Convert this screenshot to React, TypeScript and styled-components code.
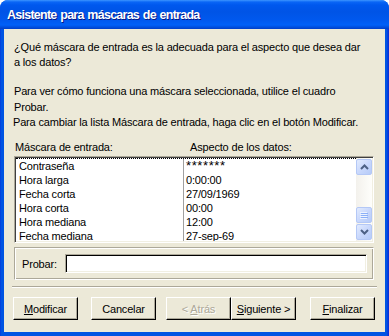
import React from "react";
import styled, { createGlobalStyle } from "styled-components";

const GlobalStyle = createGlobalStyle`
  html, body { margin: 0; padding: 0; background: #ffffff; }
  * { box-sizing: border-box; }
`;

const Window = styled.div`
  width: 389px;
  height: 336px;
  display: flex;
  flex-direction: column;
  background: #0054e3;
  border-radius: 8px 8px 0 0;
  overflow: hidden;
  font-family: "Liberation Sans", Arial, sans-serif;
  font-size: 11px;
  letter-spacing: -0.17px;
  color: #000;
`;

const TitleBar = styled.div`
  height: 29px;
  flex: none;
  display: flex;
  align-items: center;
  padding: 1px 0 0 7px;
  background: linear-gradient(
    to bottom,
    #3d95ff 0px,
    #0a66f6 2px,
    #0058ee 5px,
    #0054e6 12px,
    #0058ee 20px,
    #0060f8 25px,
    #0050e0 27px,
    #003ec8 29px
  );
  color: #ffffff;
  font-family: "Liberation Sans", Arial, sans-serif;
  font-weight: bold;
  font-size: 12.5px;
  letter-spacing: -0.75px;
  word-spacing: 1px;
  text-shadow: 1px 1px 0 #0a1883;
`;

const Frame = styled.div`
  flex: 1;
  display: flex;
  padding: 0 4px 4px 4px;
  background: linear-gradient(to right, #0831d9 0, #0054e3 1px, #0054e3 387px, #0831d9 388px);
`;

const Body = styled.div`
  flex: 1;
  display: flex;
  flex-direction: column;
  background: #ece9d8;
`;

const Text = styled.div<{ $top: number; $left?: number; $lh?: number }>`
  margin-top: ${(p) => p.$top}px;
  margin-left: ${(p) => p.$left ?? 10}px;
  line-height: ${(p) => p.$lh ?? 15}px;
  white-space: nowrap;
`;

const Labels = styled.div`
  margin-top: 10px;
  margin-left: 11px;
  display: flex;
  line-height: 14px;
`;

const Label = styled.span<{ $w?: number }>`
  width: ${(p) => (p.$w ? `${p.$w}px` : "auto")};
`;

const ListBox = styled.div`
  margin-top: 2px;
  margin-left: 10px;
  width: 360px;
  height: 87px;
  display: flex;
  background: #ffffff;
  border-top: 1px solid #aca899;
  border-left: 1px solid #aca899;
  border-bottom: 1px solid #ffffff;
  border-right: 1px solid #ffffff;
  box-shadow: inset 1px 1px 0 #404040, inset -1px -1px 0 #f1efe2;
  padding: 1px;
`;

const Rows = styled.div`
  flex: 1;
  overflow: hidden;
  border-top: 1px dotted #000;
`;

const Row = styled.div`
  display: flex;
  height: 14px;
  line-height: 14px;
`;

const Cell = styled.div<{ $first?: boolean }>`
  width: ${(p) => (p.$first ? "167px" : "auto")};
  flex: ${(p) => (p.$first ? "none" : "1")};
  padding-left: ${(p) => (p.$first ? 3 : 2)}px;
  border-left: ${(p) => (p.$first ? "none" : "1px solid #a0a0a0")};
  white-space: nowrap;
`;

const Stars = styled.span`
  font-size: 13px;
  letter-spacing: 0.6px;
  line-height: 14px;
`;

const Scrollbar = styled.div`
  width: 16px;
  flex: none;
  display: flex;
  flex-direction: column;
  background: linear-gradient(to right, #f3f1ec, #fefefb);
`;

const ScrollButton = styled.div<{ $mt?: number }>`
  width: 16px;
  height: 16px;
  margin-top: ${(p) => p.$mt ?? 0}px;
  display: flex;
  align-items: center;
  justify-content: center;
  border: 1px solid #b4c8f6;
  border-radius: 2px;
  background: linear-gradient(135deg, #e2ebfe 0%, #c9d8fc 50%, #b6cbf8 100%);
`;

const U = styled.span`
  text-decoration: underline;
`;

const Group = styled.div`
  margin-top: 4px;
  margin-left: 10px;
  width: 360px;
  height: 33px;
  display: flex;
  align-items: center;
  padding-left: 7px;
  border-top: 1px solid #aca899;
  border-left: 1px solid #aca899;
  border-bottom: 1px solid #ffffff;
  border-right: 1px solid #ffffff;
  box-shadow: inset 1px 1px 0 #ffffff, inset -1px -1px 0 #aca899;
`;

const GroupLabel = styled.span`
  width: 43px;
  flex: none;
`;

const Input = styled.div`
  width: 302px;
  height: 19px;
  background: #ffffff;
  border-top: 1px solid #aca899;
  border-left: 1px solid #aca899;
  border-bottom: 1px solid #ffffff;
  border-right: 1px solid #ffffff;
  box-shadow: inset 1px 1px 0 #000000, inset -1px -1px 0 #f1efe2;
`;

const Separator = styled.div`
  margin-top: 6px;
  margin-left: 8px;
  width: 365px;
  height: 2px;
  border-top: 1px solid #aca899;
  border-bottom: 1px solid #ffffff;
`;

const ButtonRow = styled.div`
  margin-top: 9px;
  padding-left: 9px;
  display: flex;
`;

const Button = styled.div<{ $ml?: number; $disabled?: boolean }>`
  width: 65px;
  height: 23px;
  margin-left: ${(p) => p.$ml ?? 0}px;
  display: flex;
  align-items: center;
  justify-content: center;
  background: #ece9d8;
  border-top: 1px solid #ffffff;
  border-left: 1px solid #ffffff;
  border-bottom: 1px solid #000000;
  border-right: 1px solid #000000;
  box-shadow: inset -1px -1px 0 #aca899;
  color: ${(p) => (p.$disabled ? "#aca899" : "#000")};
  text-shadow: ${(p) => (p.$disabled ? "1px 1px 0 #ffffff" : "none")};
  white-space: nowrap;
`;

const Arrow: React.FC<{ up?: boolean }> = ({ up }) => (
  <svg width="9" height="6" viewBox="0 0 9 6">
    <path
      d={up ? "M1 5 L4.5 1.5 L8 5" : "M1 1 L4.5 4.5 L8 1"}
      fill="none"
      stroke="#4d6185"
      strokeWidth="2"
    />
  </svg>
);

const Grip = () => (
  <svg width="8" height="7" viewBox="0 0 8 7">
    <path d="M0 0.5 H7 M0 2.5 H7 M0 4.5 H7 M0 6.5 H7" stroke="#eef4fe" strokeWidth="1" />
    <path d="M1 1.5 H8 M1 3.5 H8 M1 5.5 H8" stroke="#8cb0f8" strokeWidth="1" />
  </svg>
);

const rows: [string, string][] = [
  ["Contraseña", "*******"],
  ["Hora larga", "0:00:00"],
  ["Fecha corta", "27/09/1969"],
  ["Hora corta", "00:00"],
  ["Hora mediana", "12:00"],
  ["Fecha mediana", "27-sep-69"],
];

export default function App() {
  return (
    <>
      <GlobalStyle />
      <Window>
        <TitleBar>Asistente para máscaras de entrada</TitleBar>
        <Frame>
          <Body>
            <Text $top={11}>
              ¿Qué máscara de entrada es la adecuada para el aspecto que desea dar
              <br />a los datos?
            </Text>
            <Text $top={13} $lh={16}>
              Para ver cómo funciona una máscara seleccionada, utilice el cuadro
              <br />
              Probar.
            </Text>
            <Text $top={0} $left={9}>
              Para cambiar la lista Máscara de entrada, haga clic en el botón Modificar.
            </Text>
            <Labels>
              <Label $w={175}>Máscara de entrada:</Label>
              <Label>Aspecto de los datos:</Label>
            </Labels>
            <ListBox>
              <Rows>
                {rows.map(([a, b], i) => (
                  <Row key={a}>
                    <Cell $first>{a}</Cell>
                    <Cell>{i === 0 ? <Stars>{b}</Stars> : b}</Cell>
                  </Row>
                ))}
              </Rows>
              <Scrollbar>
                <ScrollButton $mt={1}>
                  <Arrow up />
                </ScrollButton>
                <ScrollButton $mt={32}>
                  <Grip />
                </ScrollButton>
                <ScrollButton $mt={1}>
                  <Arrow />
                </ScrollButton>
              </Scrollbar>
            </ListBox>
            <Group>
              <GroupLabel>Probar:</GroupLabel>
              <Input />
            </Group>
            <Separator />
            <ButtonRow>
              <Button>
                <span>
                  <U>M</U>odificar
                </span>
              </Button>
              <Button $ml={13}>Cancelar</Button>
              <Button $ml={10} $disabled>
                <span>
                  &lt; <U>A</U>trás
                </span>
              </Button>
              <Button>
                <span>
                  <U>S</U>iguiente &gt;
                </span>
              </Button>
              <Button $ml={14}>
                <span>
                  <U>F</U>inalizar
                </span>
              </Button>
            </ButtonRow>
          </Body>
        </Frame>
      </Window>
    </>
  );
}
